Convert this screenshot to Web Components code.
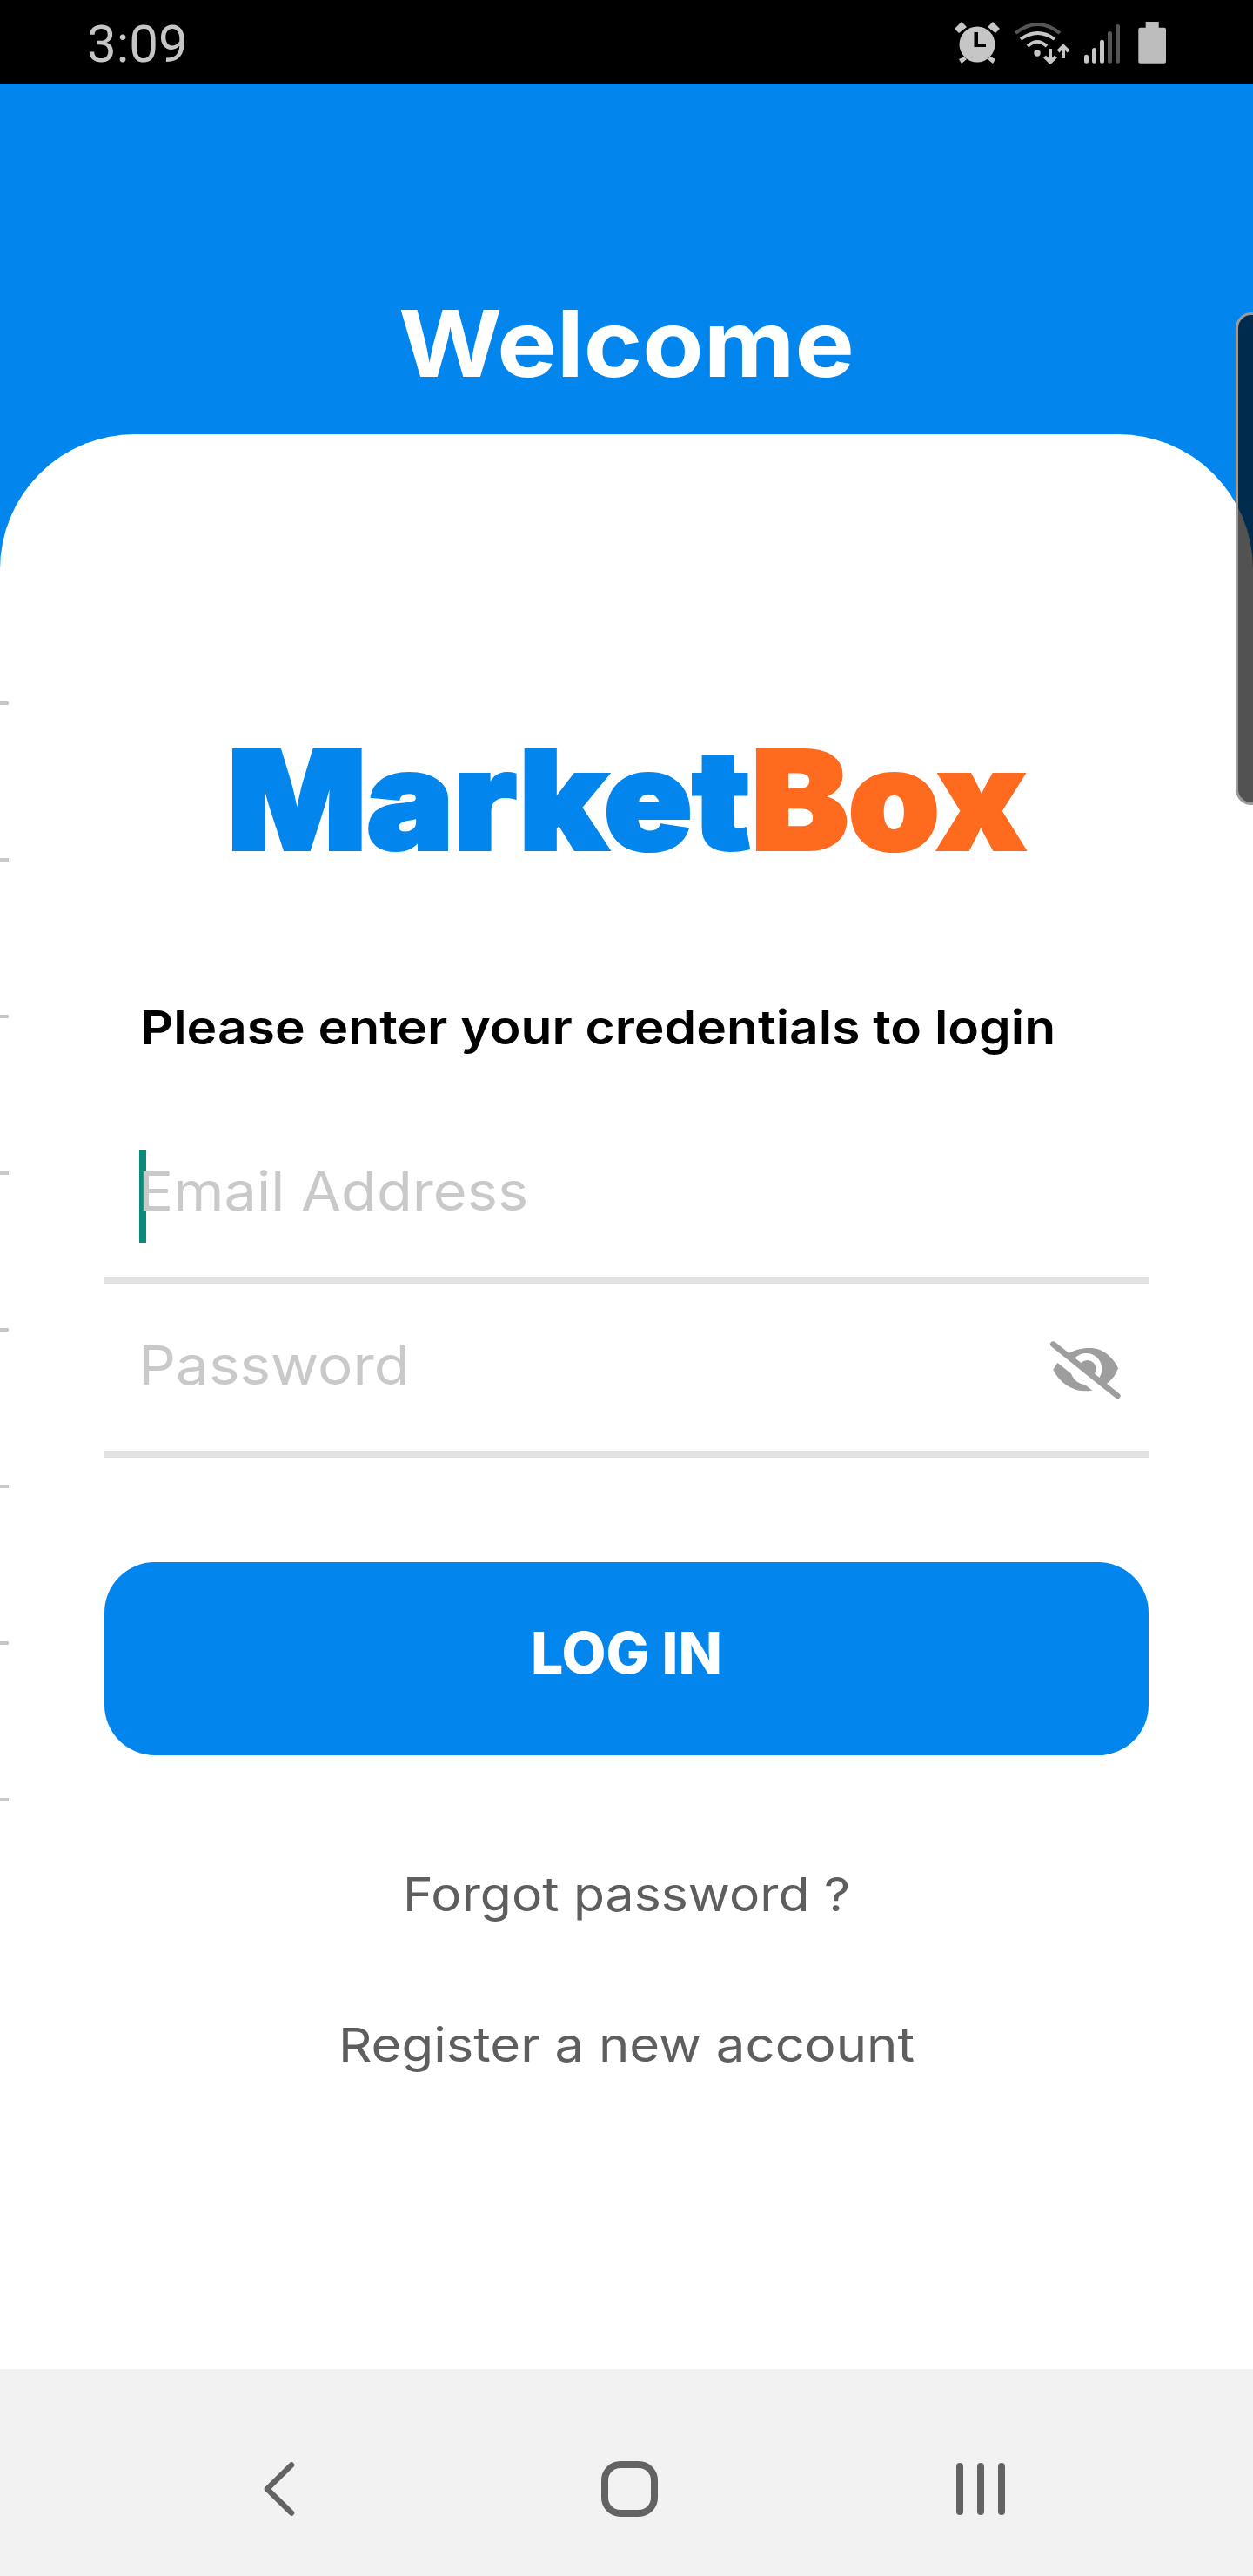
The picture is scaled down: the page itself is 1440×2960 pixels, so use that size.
<!doctype html>
<html>
<head>
<meta charset="utf-8">
<title>MarketBox</title>
<style>
    html, body { margin: 0; padding: 0; }
    body {
        width: 1440px;
        height: 2960px;
        overflow: hidden;
        display: flex;
        flex-direction: column;
        position: relative;
        background: #0286ee;
        font-family: Inter, "Noto Sans", sans-serif;
    }
</style>
</head>
<body>
<status-bar time="3:09"></status-bar>
<welcome-header>Welcome</welcome-header>
<login-card></login-card>
<nav-bar></nav-bar>
<edge-ticks></edge-ticks>
<edge-panel></edge-panel>

<script>
class StatusBar extends HTMLElement {
    constructor() {
        super();
        this.attachShadow({ mode: 'open' });
        this.shadowRoot.innerHTML = `
            <style>
                :host {
                    display: flex;
                    flex: none;
                    height: 96px;
                    background: #000;
                    align-items: center;
                    justify-content: space-between;
                    padding: 0 94px 0 100px;
                    box-sizing: border-box;
                    color: #c6c6c6;
                }
                .time { font: 400 60px/96px Roboto, sans-serif; padding-top: 6px; }
                svg { display: block; }
            </style>
            <span class="time">${this.getAttribute('time')}</span>
            <svg width="256" height="60" viewBox="1090 18 256 60" fill="#c6c6c6">
                <!-- alarm -->
                <circle cx="1123" cy="51" r="20.5"/>
                <path d="M1097 33 L1105 25 L1111 31 L1102 38 Z M1149 33 L1141 25 L1135 31 L1144 38 Z M1102 68 L1108 65 L1111 68 L1105 73 Z M1144 68 L1138 65 L1135 68 L1141 73 Z"/>
                <path d="M1119.5 37 H1124 V50 H1133 V54 H1119.5 Z" fill="#000"/>
                <!-- wifi -->
                <g fill="none" stroke-width="4">
                    <path d="M1167 38 Q1192.5 18 1218 38" stroke="#555"/>
                    <path d="M1173 45 Q1192.5 31 1212 45" stroke="#c6c6c6"/>
                    <path d="M1181 53 Q1192 43 1203 53" stroke="#c6c6c6"/>
                    <path d="M1207 56 V71 M1200.5 65 L1207 71.5 L1213.5 65" stroke="#c6c6c6"/>
                    <path d="M1222 67 V54 M1216 59 L1222 53 L1228 59" stroke="#c6c6c6"/>
                </g>
                <circle cx="1192" cy="61" r="3.7"/>
                <!-- signal -->
                <rect x="1246" y="62.7" width="5" height="10" rx="2.5"/>
                <rect x="1255" y="55" width="5" height="17.7" rx="2.5"/>
                <rect x="1264" y="45.7" width="5" height="27" rx="2.5"/>
                <rect x="1273" y="36" width="5" height="36.7" rx="2.5" fill="#555"/>
                <rect x="1282" y="28" width="5" height="44.7" rx="2.5" fill="#555"/>
                <!-- battery -->
                <path d="M1316.7 25 H1331.7 V31.7 H1338 Q1340 31.7 1340 33.7 V70.7 Q1340 72.7 1338 72.7 H1310.3 Q1308.3 72.7 1308.3 70.7 V33.7 Q1308.3 31.7 1310.3 31.7 H1316.7 Z" fill="#bdbdbd"/>
            </svg>
        `;
    }
}

class WelcomeHeader extends HTMLElement {
    constructor() {
        super();
        this.attachShadow({ mode: 'open' });
        this.shadowRoot.innerHTML = `
            <style>
                :host {
                    display: flex;
                    flex: none;
                    height: 403px;
                    color: #fff;
                    justify-content: center;
                    box-sizing: border-box;
                    padding-top: 237px;
                    font: 700 106px/124px Inter, sans-serif;
                }
                span { display: inline-block; transform: scaleX(1.083); }
            </style>
            <span><slot></slot></span>
        `;
    }
}

class TextField extends HTMLElement {
    constructor() {
        super();
        this.attachShadow({ mode: 'open' });
        this.shadowRoot.innerHTML = `
            <style>
                :host {
                    display: flex;
                    position: relative;
                    height: 200px;
                    box-sizing: border-box;
                    border-bottom: 8px solid #e3e3e3;
                    align-items: flex-end;
                    padding: 0 30px 58px 39px;
                    justify-content: space-between;
                }
                .placeholder {
                    display: inline-block;
                    font: 400 62px/80px Inter, sans-serif;
                    color: #c9c9c9;
                    transform-origin: left center;
                    transform: scaleX(var(--fit, 1));
                }
                .caret { position: absolute; left: 40px; top: 47px; width: 8px; height: 106px; background: #0a8a78; }
                ::slotted(*) { display: block; }
            </style>
            ${this.hasAttribute('focused') ? '<div class="caret"></div>' : ''}
            <span class="placeholder">${this.getAttribute('placeholder')}</span>
            <slot></slot>
        `;
    }
}

class LoginCard extends HTMLElement {
    constructor() {
        super();
        this.attachShadow({ mode: 'open' });
        this.shadowRoot.innerHTML = `
            <style>
                :host {
                    display: flex;
                    flex-direction: column;
                    flex: none;
                    height: 2223px;
                    background: #fff;
                    border-radius: 155px 155px 0 0;
                    box-sizing: border-box;
                    padding: 340px 120px 0;
                    font-family: Inter, sans-serif;
                }
                .logo {
                    font: 900 157px/160px Inter, sans-serif;
                    text-align: center;
                    color: #0286ee;
                    height: 160px;
                    white-space: nowrap;
                    -webkit-text-stroke: 4px currentColor;
                    transform: scaleX(1.066);
                }
                .logo b { font-weight: 900; color: #fe6a1e; }
                .intro {
                    font: 600 54px/70px Inter, sans-serif;
                    color: #000;
                    margin: 0;
                    padding: 147px 0 0 38px;
                    white-space: nowrap;
                    transform-origin: left center;
                    transform: scaleX(1.088);
                }
                .fields { margin-top: 59px; }
                .btn {
                    height: 222px;
                    margin-top: 120px;
                    padding-bottom: 14px;
                    box-sizing: border-box;
                    background: #0286ee;
                    color: #fff;
                    border-radius: 58px;
                    display: flex;
                    align-items: center;
                    justify-content: center;
                    font: 800 66px/1 Inter, sans-serif;
                }
                .link { text-align: center; color: #5e5e5e; font: 400 54px/72px Inter, sans-serif; }
                .forgot { margin-top: 124px; transform: scaleX(1.09); }
                .register { margin-top: 101px; transform: scaleX(1.108); }
            </style>
            <div class="logo">Market<b>Box</b></div>
            <p class="intro">Please enter your credentials to login</p>
            <div class="fields">
                <text-field placeholder="Email Address" focused style="--fit: 1.076"></text-field>
                <text-field placeholder="Password" style="--fit: 1.087">
                    <svg width="84" height="70" viewBox="200 120 250 210">
                        <path fill="#9e9e9e" d="M212 225 C240 170 290 150 340 150 C385 150 420 185 436 220 C420 265 375 298 325 298 C275 298 235 270 212 225 Z"/>
                        <circle cx="326" cy="222" r="54" fill="#fff"/>
                        <circle cx="330" cy="222" r="30" fill="#9e9e9e"/>
                        <path d="M190 150 L424 336" stroke="#fff" stroke-width="34" fill="none"/>
                        <path d="M212 137 L434 315" stroke="#9e9e9e" stroke-width="20" stroke-linecap="round" fill="none"/>
                    </svg>
                </text-field>
            </div>
            <div class="btn">LOG IN</div>
            <div class="link forgot">Forgot password ?</div>
            <div class="link register">Register a new account</div>
        `;
    }
}

class NavBar extends HTMLElement {
    constructor() {
        super();
        this.attachShadow({ mode: 'open' });
        this.shadowRoot.innerHTML = `
            <style>
                :host {
                    display: flex;
                    flex: none;
                    height: 238px;
                    background: #f2f2f2;
                    align-items: center;
                    box-sizing: border-box;
                    padding: 38px 0 0 303px;
                }
                svg { display: block; }
                .home {
                    width: 65px;
                    height: 64px;
                    box-sizing: border-box;
                    border: 8px solid #636363;
                    border-radius: 22px;
                    margin: 0 343px 0 352px;
                }
            </style>
            <svg width="36" height="62" viewBox="0 0 36 62">
                <path d="M32 3.5 L4 31 L32 58.5" fill="none" stroke="#636363" stroke-width="6.5" stroke-linecap="round" stroke-linejoin="round"/>
            </svg>
            <div class="home"></div>
            <svg width="56" height="60" viewBox="0 0 56 60" fill="#636363">
                <rect x="0" y="0" width="8" height="60" rx="4"/>
                <rect x="24" y="0" width="8" height="60" rx="4"/>
                <rect x="48" y="0" width="8" height="60" rx="4"/>
            </svg>
        `;
    }
}

// tick marks along the left screen edge, they sit over the page
class EdgeTicks extends HTMLElement {
    constructor() {
        super();
        this.attachShadow({ mode: 'open' });
        let ticks = '';
        for (let i = 0; i < 8; i++) {
            ticks += '<i></i>';
        }
        this.shadowRoot.innerHTML = `
            <style>
                :host {
                    position: absolute;
                    left: 0;
                    top: 806px;
                    display: flex;
                    flex-direction: column;
                    gap: 176px;
                }
                i { display: block; width: 10px; height: 4px; background: #c8c8c8; }
            </style>
            ${ticks}
        `;
    }
}

// samsung edge panel handle, lies over the right edge
class EdgePanel extends HTMLElement {
    constructor() {
        super();
        this.attachShadow({ mode: 'open' });
        this.shadowRoot.innerHTML = `
            <style>
                :host {
                    position: absolute;
                    right: 0;
                    top: 359px;
                    width: 20px;
                    height: 566px;
                    box-sizing: border-box;
                    background: rgba(0, 0, 0, .68);
                    border: 3px solid #9a9a9a;
                    border-right: 0;
                    border-radius: 18px 0 0 18px;
                }
            </style>
        `;
    }
}

customElements.define('status-bar', StatusBar);
customElements.define('welcome-header', WelcomeHeader);
customElements.define('text-field', TextField);
customElements.define('login-card', LoginCard);
customElements.define('nav-bar', NavBar);
customElements.define('edge-ticks', EdgeTicks);
customElements.define('edge-panel', EdgePanel);
</script>
</body>
</html>
